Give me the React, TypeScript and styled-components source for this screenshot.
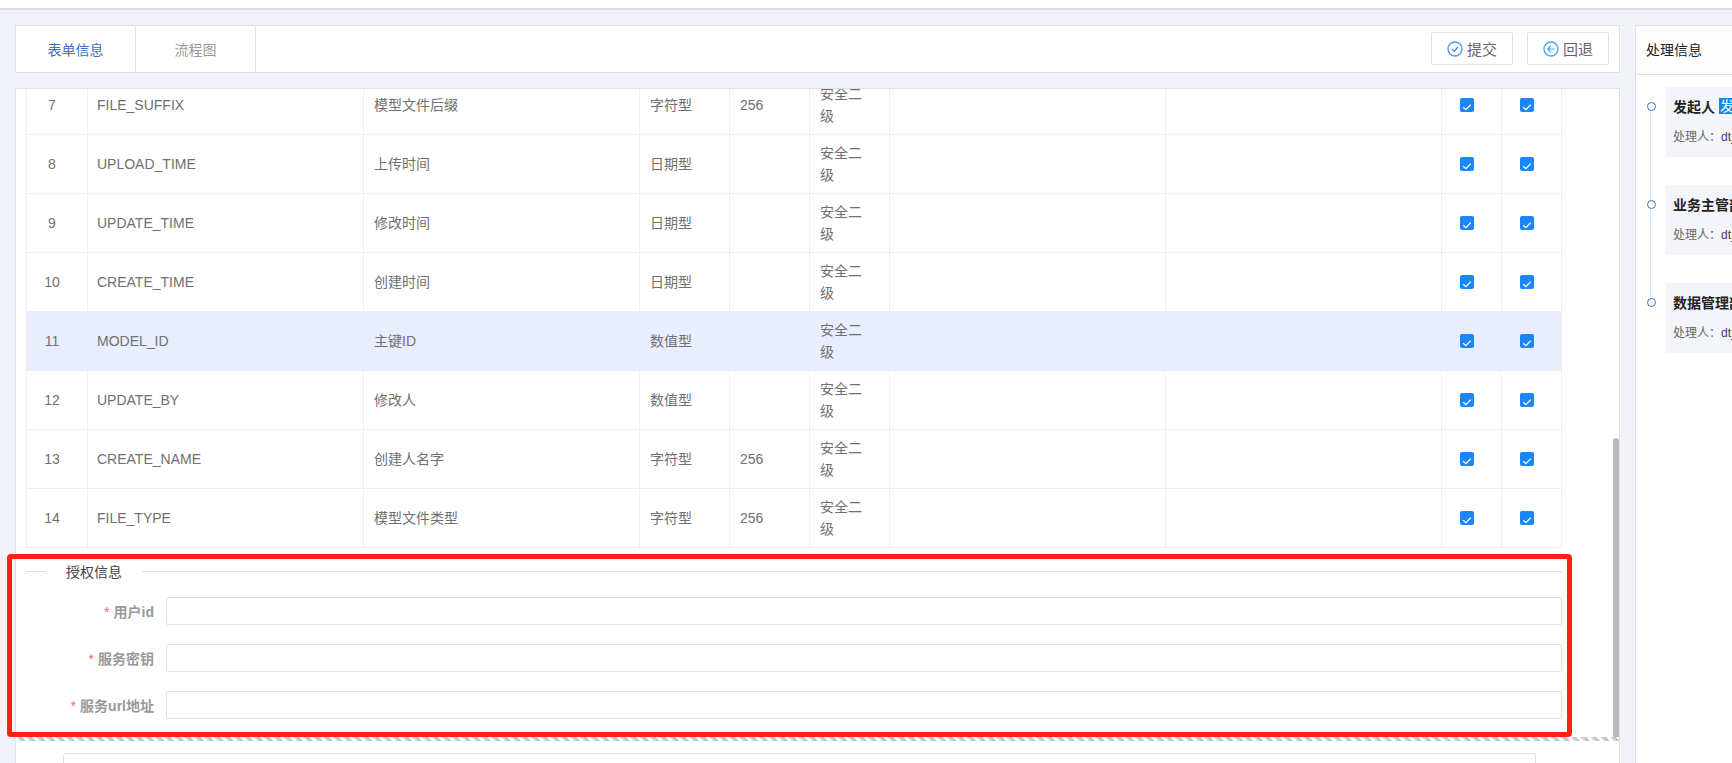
import React from "react";
import styled, { createGlobalStyle } from "styled-components";

const Global = createGlobalStyle`
  html, body { margin: 0; padding: 0; background: #f2f3f8; overflow: hidden; }
  * { box-sizing: border-box; }
  body { font-family: "Liberation Sans", "Noto Sans CJK SC", sans-serif; font-size: 14px; color: #666; }
`;

const Page = styled.div`
  position: relative;
  width: 1732px;
  height: 763px;
  overflow: hidden;
  display: flex;
  flex-direction: column;
`;
const TopStrip = styled.div`
  flex: none;
  height: 10px;
  background: #fff;
  border-bottom: 2px solid #dcdde2;
`;
const Body = styled.div`
  flex: 1;
  min-height: 0;
  display: flex;
  gap: 15px;
  padding: 15px 0 0 15px;
`;
const MainColumn = styled.div`
  flex: none;
  width: 1605px;
  display: flex;
  flex-direction: column;
  gap: 15px;
`;
const TabBar = styled.div`
  flex: none;
  height: 48px;
  display: flex;
  align-items: stretch;
  justify-content: space-between;
  background: #fff;
  border: 1px solid #dfe1ea;
`;
const Tabs = styled.div`
  display: flex;
`;
const Tab = styled.div<{ $active?: boolean }>`
  width: 120px;
  display: flex;
  align-items: center;
  justify-content: center;
  border-right: 1px solid #dfe1ea;
  color: ${(p) => (p.$active ? "#3f6fc0" : "#999")};
`;
const Actions = styled.div`
  display: flex;
  gap: 14px;
  padding: 6px 10px 0 0;
`;
const ActionButton = styled.button`
  width: 82px;
  height: 33px;
  display: flex;
  align-items: center;
  justify-content: center;
  gap: 4px;
  padding: 0;
  background: #fff;
  border: 1px solid #dfe1e8;
  border-radius: 2px;
  color: #666;
  font: inherit;
  font-size: 15px;
`;
const Panel = styled.div`
  position: relative;
  flex: 1;
  min-height: 0;
  overflow: hidden;
  background: #fff;
  border: 1px solid #dfe1ea;
  border-bottom: 0;
  padding-left: 10px;
`;
const Table = styled.table`
  width: 1535px;
  margin-top: -14px;
  table-layout: fixed;
  border-collapse: collapse;
`;
const Row = styled.tr<{ $active?: boolean }>`
  height: 59px;
  background: ${(p) => (p.$active ? "#e8eefd" : "#fff")};
`;
const Cell = styled.td`
  padding: 0 10px;
  border: 1px solid #ebeef5;
  line-height: 22px;
  color: #707070;
  white-space: nowrap;
`;
const IndexCell = styled(Cell)`
  text-align: center;
  padding: 0 20px 0 10px;
`;
const CodeCell = styled(Cell)`
  padding-left: 9px;
`;
const CheckCell = styled(Cell)`
  padding: 0 0 0 18px;
`;
const Level = styled.span`
  display: block;
  width: 44px;
  white-space: normal;
`;
const CheckBox = styled.span`
  display: block;
  width: 14px;
  height: 14px;
  border-radius: 2px;
  background: #1a86f8;
`;
const SectionTitle = styled.div`
  display: flex;
  align-items: center;
  width: 1536px;
  height: 20px;
  margin: 13px 0 16px;
  color: #444;
  &::before {
    content: "";
    width: 20px;
    border-top: 1px solid #dcdfe6;
  }
  &::after {
    content: "";
    flex: 1;
    border-top: 1px solid #dcdfe6;
  }
`;
const SectionText = styled.span`
  padding: 0 20px;
`;
const Form = styled.div`
  width: 1536px;
  display: flex;
  flex-direction: column;
  gap: 19px;
`;
const Field = styled.div`
  display: grid;
  grid-template-columns: 128px 1fr;
  column-gap: 12px;
  align-items: center;
`;
const Label = styled.label`
  text-align: right;
  font-weight: 700;
  color: #999;
  white-space: nowrap;
`;
const Required = styled.span`
  color: #f56c6c;
  font-weight: 400;
  margin-right: 4px;
`;
const TextInput = styled.input`
  width: 100%;
  height: 28px;
  padding: 0 10px;
  background: #fff;
  border: 1px solid #dcdfe6;
  border-radius: 2px;
`;
const Hatch = styled.div`
  height: 4px;
  margin: 18px 0 12px -8px;
  background: repeating-linear-gradient(45deg, #fff 0, #fff 1px, #d8d8d8 2px, #bcbcbc 5px, #fff 6px, #fff 7px);
`;
const EditorBox = styled.div`
  width: 1473px;
  height: 60px;
  margin-left: 37px;
  border: 1px solid #dcdfe6;
  border-radius: 3px;
`;
const ScrollThumb = styled.div`
  position: absolute;
  top: 349px;
  right: 0;
  width: 6px;
  height: 299px;
  background: #b9b9be;
  border-radius: 3px 3px 0 0;
`;
const Side = styled.aside`
  flex: none;
  width: 200px;
  background: #fff;
  border-left: 1px solid #e0e2ea;
  border-top: 1px solid #dfe1ea;
`;
const SideHeader = styled.div`
  height: 49px;
  display: flex;
  align-items: center;
  padding: 0 0 2px 10px;
  background: #fdfdfd;
  border-bottom: 1px solid #dfe1ea;
  color: #222;
`;
const Timeline = styled.div`
  display: flex;
  flex-direction: column;
  gap: 28px;
  padding: 12px 0 0 30px;
`;
const TimelineItem = styled.div<{ $last?: boolean }>`
  position: relative;
  height: 70px;
  padding: 9px 0 0 7px;
  background: #f4f5fa;
  white-space: nowrap;
  &::before {
    content: "";
    display: ${(p) => (p.$last ? "none" : "block")};
    position: absolute;
    left: -16px;
    top: 19px;
    width: 1px;
    height: 98px;
    background: #d7e6fa;
  }
  &::after {
    content: "";
    position: absolute;
    left: -19px;
    top: 15px;
    width: 7px;
    height: 7px;
    background: #fff;
    border: 1.5px solid #3b71c0;
    border-radius: 50%;
  }
`;
const ItemTitle = styled.div`
  display: flex;
  align-items: center;
  gap: 4px;
  height: 19px;
  font-weight: 700;
  color: #222;
`;
const Tag = styled.span`
  padding: 0 1px;
  height: 16px;
  line-height: 16px;
  background: #0b8ce9;
  color: #fff;
  font-weight: 400;
`;
const ItemMeta = styled.div`
  margin-top: 13px;
  font-size: 12px;
  line-height: 18px;
  color: #666;
`;
const MetaValue = styled.span`
  color: #444;
`;
const Annotation = styled.div`
  position: absolute;
  left: 7px;
  top: 554px;
  width: 1565px;
  height: 183px;
  border: 5px solid #ff2014;
  border-radius: 4px;
  pointer-events: none;
`;

const rows = [
  [7, "FILE_SUFFIX", "模型文件后缀", "字符型", "256"],
  [8, "UPLOAD_TIME", "上传时间", "日期型", ""],
  [9, "UPDATE_TIME", "修改时间", "日期型", ""],
  [10, "CREATE_TIME", "创建时间", "日期型", ""],
  [11, "MODEL_ID", "主键ID", "数值型", ""],
  [12, "UPDATE_BY", "修改人", "数值型", ""],
  [13, "CREATE_NAME", "创建人名字", "字符型", "256"],
  [14, "FILE_TYPE", "模型文件类型", "字符型", "256"],
] as const;

const widths = [61, 276, 276, 90, 80, 80, 276, 276, 60, 60];

const SubmitIcon = () => (
  <svg width="16" height="16" viewBox="0 0 16 16" fill="none" stroke="#4a9fe8">
    <circle cx="8" cy="8" r="7" strokeWidth="1.4" />
    <path d="M5.2 8.2 7.3 10.3 10.9 6" strokeWidth="1.2" stroke="#3f7fd0" />
  </svg>
);
const BackIcon = () => (
  <svg width="16" height="16" viewBox="0 0 16 16" fill="none" stroke="#4aa8e8">
    <circle cx="8" cy="8" r="7" strokeWidth="1.4" />
    <path d="M8 4.6 4.7 8 8 11.4M4.9 8H11.6" strokeWidth="1.2" />
  </svg>
);
const Check = () => (
  <svg width="14" height="14" viewBox="0 0 14 14" fill="none" stroke="#fff" strokeWidth="1.3">
    <path d="M3.2 7.2 5.9 9.7 10.8 4.6" />
  </svg>
);

const fields = ["用户id", "服务密钥", "服务url地址"];
const steps = [
  { title: "发起人", tag: "发起" },
  { title: "业务主管部门" },
  { title: "数据管理部门" },
];

export default function App() {
  return (
    <Page>
      <Global />
      <TopStrip />
      <Body>
        <MainColumn>
          <TabBar>
            <Tabs>
              <Tab $active>表单信息</Tab>
              <Tab>流程图</Tab>
            </Tabs>
            <Actions>
              <ActionButton><SubmitIcon />提交</ActionButton>
              <ActionButton><BackIcon />回退</ActionButton>
            </Actions>
          </TabBar>
          <Panel>
            <Table>
              <colgroup>
                {widths.map((w, i) => <col key={i} width={w} />)}
              </colgroup>
              <tbody>
                {rows.map(([n, code, name, type, len]) => (
                  <Row key={n} $active={n === 11}>
                    <IndexCell>{n}</IndexCell>
                    <CodeCell>{code}</CodeCell>
                    <Cell>{name}</Cell>
                    <Cell>{type}</Cell>
                    <Cell>{len}</Cell>
                    <Cell><Level>安全二级</Level></Cell>
                    <Cell />
                    <Cell />
                    <CheckCell><CheckBox><Check /></CheckBox></CheckCell>
                    <CheckCell><CheckBox><Check /></CheckBox></CheckCell>
                  </Row>
                ))}
              </tbody>
            </Table>
            <SectionTitle><SectionText>授权信息</SectionText></SectionTitle>
            <Form>
              {fields.map((f) => (
                <Field key={f}>
                  <Label><Required>*</Required>{f}</Label>
                  <TextInput />
                </Field>
              ))}
            </Form>
            <Hatch />
            <EditorBox />
            <ScrollThumb />
          </Panel>
        </MainColumn>
        <Side>
          <SideHeader>处理信息</SideHeader>
          <Timeline>
            {steps.map((s, i) => (
              <TimelineItem key={s.title} $last={i === steps.length - 1}>
                <ItemTitle>{s.title}{s.tag && <Tag>{s.tag}</Tag>}</ItemTitle>
                <ItemMeta>处理人：<MetaValue>dt_admin</MetaValue></ItemMeta>
              </TimelineItem>
            ))}
          </Timeline>
        </Side>
      </Body>
      <Annotation />
    </Page>
  );
}
